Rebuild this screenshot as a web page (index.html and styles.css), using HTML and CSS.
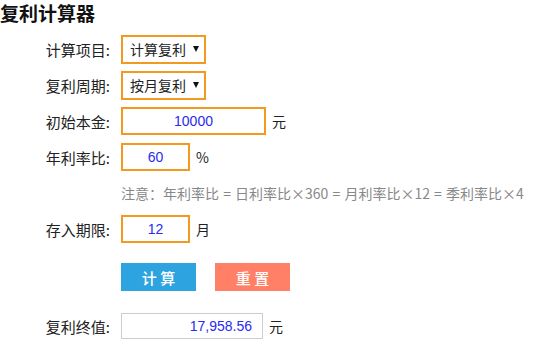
FILE: index.html
```html
<!DOCTYPE html>
<html lang="zh-CN">
<head>
    <meta charset="UTF-8">
    <title>复利计算器</title>
    <link rel="stylesheet" href="styles.css">
</head>
<body>
    <h1>复利计算器</h1>
    <form class="calc">
        <div class="row">
            <label>计算项目:</label>
            <div class="select">计算复利<span class="arrow"></span></div>
        </div>
        <div class="row">
            <label>复利周期:</label>
            <div class="select">按月复利<span class="arrow"></span></div>
        </div>
        <div class="row">
            <label>初始本金:</label>
            <input class="field wide" type="text" value="10000">
            <span class="unit">元</span>
        </div>
        <div class="row">
            <label>年利率比:</label>
            <input class="field" type="text" value="60">
            <span class="unit">%</span>
        </div>
        <div class="row">
            <label></label>
            <p class="note">注意：年利率比 = 日利率比×360 = 月利率比×12 = 季利率比×4</p>
        </div>
        <div class="row">
            <label>存入期限:</label>
            <input class="field" type="text" value="12">
            <span class="unit">月</span>
        </div>
        <div class="row buttons">
            <label></label>
            <button type="button" class="btn btn-calc">计 算</button>
            <button type="button" class="btn btn-reset">重 置</button>
        </div>
        <div class="row result-row">
            <label>复利终值:</label>
            <input class="result" type="text" value="17,958.56" readonly>
            <span class="unit">元</span>
        </div>
    </form>
</body>
</html>
```

FILE: styles.css
```css
* {
    margin: 0;
    padding: 0;
    box-sizing: border-box;
}

body {
    font-family: "Noto Sans CJK SC", "Noto Sans", sans-serif;
    font-size: 14px;
    color: #222;
    background: #fff;
}

h1 {
    font-size: 19px;
    font-weight: 700;
    line-height: 26px;
    margin-bottom: 9px;
    color: #111;
}

.row {
    display: flex;
    align-items: center;
    height: 28px;
    margin-bottom: 8px;
}

.row label {
    width: 110px;
    margin-right: 11px;
    text-align: right;
    flex-shrink: 0;
    font-size: 15px;
}

.select {
    width: 85px;
    height: 29px;
    border: 2px solid #f3991f;
    display: flex;
    align-items: center;
    padding-left: 7px;
    color: #222;
}

/* small dropdown triangle */
.select .arrow {
    width: 0;
    height: 0;
    margin-left: 7px;
    border-left: 3px solid transparent;
    border-right: 3px solid transparent;
    border-top: 6px solid #111;
}

.field {
    width: 69px;
    height: 28px;
    border: 2px solid #f3991f;
    text-align: center;
    font-family: "Liberation Sans", Arial, sans-serif;
    font-size: 14px;
    color: #2a2af0;
    outline: none;
}

.field.wide {
    width: 145px;
}

.unit {
    margin-left: 6px;
}

.note {
    font-size: 14px;
    word-spacing: 1px;
    color: #888;
    white-space: nowrap;
}

.buttons {
    margin-top: 20px;
    margin-bottom: 21px;
}

.btn {
    width: 75px;
    height: 28px;
    border: none;
    color: #fff;
    font-family: "Noto Sans CJK SC", sans-serif;
    font-size: 15px;
    font-weight: 500;
}

.btn-calc {
    background: #2da3e0;
}

.btn-reset {
    background: #ff8066;
    margin-left: 19px;
}

.result {
    width: 142px;
    height: 26px;
    border: 1px solid #ccc;
    text-align: right;
    padding-right: 10px;
    font-family: "Liberation Sans", Arial, sans-serif;
    font-size: 14px;
    color: #2a2af0;
    outline: none;
}
```
